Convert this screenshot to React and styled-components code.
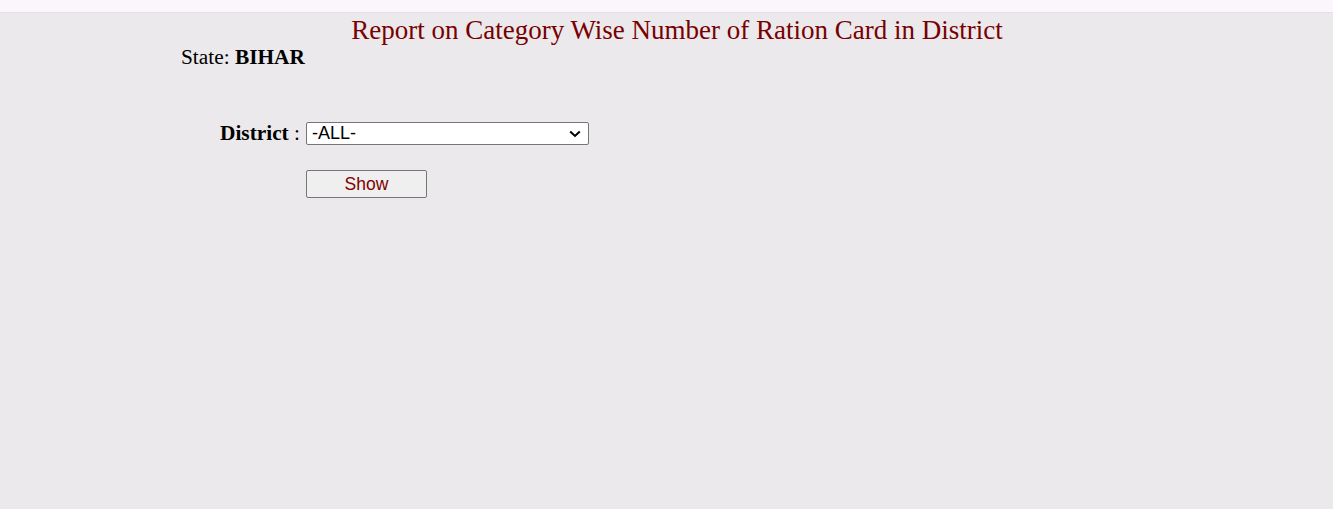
import React from "react";
import styled, { createGlobalStyle } from "styled-components";

const Global = createGlobalStyle`
  html, body { margin: 0; padding: 0; }
  body {
    background: #ebe9ec;
    font-family: "Liberation Serif", "Times New Roman", serif;
    color: #000;
  }
`;

const TopBar = styled.div`
  height: 12px;
  background: #fbf6fc;
  border-bottom: 1px solid #e4dce6;
`;

const Page = styled.div`
  min-height: 496px;
`;

const Title = styled.h1`
  margin: 0;
  padding-top: 2px;
  text-align: center;
  padding-left: 21px;
  font-size: 27px;
  font-weight: normal;
  line-height: 30px;
  color: #780000;
`;

const StateLine = styled.div`
  margin-left: 181px;
  font-size: 21.33px;
  line-height: 24px;
  b { font-weight: bold; }
`;

const Form = styled.div`
  margin-top: 52px;
  display: grid;
  grid-template-columns: 124px auto;
  column-gap: 6px;
  row-gap: 25px;
  margin-left: 176px;
  align-items: center;
`;

const Label = styled.label`
  text-align: right;
  font-size: 21.33px;
  line-height: 24px;
  white-space: nowrap;
  b { font-weight: bold; }
`;

const SelectWrap = styled.div`
  position: relative;
  width: 283px;
  height: 23px;
`;

const Select = styled.select`
  appearance: none;
  -webkit-appearance: none;
  display: block;
  width: 283px;
  height: 23px;
  box-sizing: border-box;
  font-family: "Liberation Sans", Arial, sans-serif;
  font-size: 18px;
  background: #fff;
  border: 1px solid #767676;
  border-radius: 2px;
  padding: 0 20px 0 5px;
  color: #000;
  outline: none;
`;

const Chevron = styled.svg`
  position: absolute;
  right: 8px;
  top: 8px;
  width: 12px;
  height: 8px;
  pointer-events: none;
`;

const Button = styled.button`
  display: block;
  width: 121px;
  height: 28px;
  box-sizing: border-box;
  font-family: "Liberation Sans", Arial, sans-serif;
  font-size: 17.5px;
  color: #800000;
  background: #efefef;
  border: 1px solid #767676;
  border-radius: 2px;
  padding: 0;
`;

export default function App() {
  return (
    <Page>
      <Global />
      <TopBar />
      <Title>Report on Category Wise Number of Ration Card in District</Title>
      <StateLine>
        State: <b>BIHAR</b>
      </StateLine>
      <Form>
        <Label htmlFor="district">
          <b>District</b> :
        </Label>
        <SelectWrap>
          <Select id="district" defaultValue="ALL">
            <option value="ALL">-ALL-</option>
          </Select>
          <Chevron viewBox="0 0 12 8">
            <path d="M1.2 1.5 L6 6 L10.8 1.5" fill="none" stroke="#000" strokeWidth="2" />
          </Chevron>
        </SelectWrap>
        <span />
        <div>
          <Button type="button">Show</Button>
        </div>
      </Form>
    </Page>
  );
}
